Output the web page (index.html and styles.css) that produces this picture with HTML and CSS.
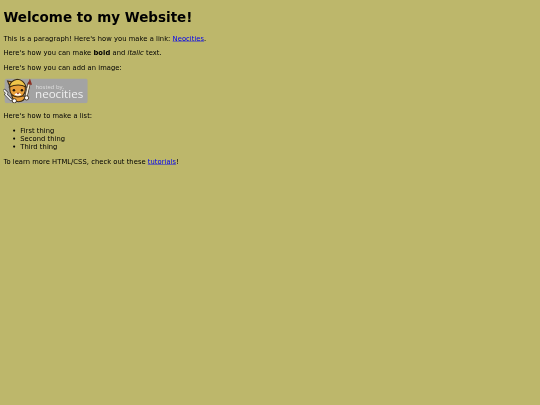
FILE: index.html
```html
<!DOCTYPE html>
<html>
<head>
  <meta charset="UTF-8">
  <title>The web site of me</title>
  <link rel="stylesheet" href="styles.css">
</head>
<body>
  <h1>Welcome to my Website!</h1>

  <p>This is a paragraph! Here's how you make a link: <a href="#">Neocities</a>.</p>

  <p>Here's how you can make <strong>bold</strong> and <em>italic</em> text.</p>

  <p>Here's how you can add an image:</p>

  <svg class="badge" viewBox="0 0 200 59" width="200" height="59">
    <rect x="3" y="0" width="197" height="59" rx="6" fill="#a3a3a3"/>
    <!-- paintbrush -->
    <path d="M54 42 L61 12" stroke="#3a2a12" stroke-width="7" stroke-linecap="round"/>
    <path d="M54 42 L61 12" stroke="#f4ecd8" stroke-width="4" stroke-linecap="round"/>
    <path d="M57 14 L63 0 L68 15 Z" fill="#8e2f22"/>
    <!-- wrench -->
    <path d="M2 28 L8 34 L6 38 L18 50" stroke="#333" stroke-width="7" fill="none" stroke-linecap="round"/>
    <path d="M2 28 L8 34 L6 38 L18 50" stroke="#ececec" stroke-width="4" fill="none" stroke-linecap="round"/>
    <!-- body and paws -->
    <path d="M20 40 Q22 55 36 55 Q50 55 52 42 Z" fill="#e9a03a" stroke="#3a2a12" stroke-width="2.5"/>
    <circle cx="26" cy="53" r="5" fill="#fff" stroke="#3a2a12" stroke-width="2"/>
    <circle cx="55" cy="46" r="5" fill="#fff" stroke="#3a2a12" stroke-width="2"/>
    <!-- ears and head -->
    <path d="M14 16 L10 6 L24 9 Z" fill="#e9a03a" stroke="#3a2a12" stroke-width="2.5"/>
    <path d="M15 24 Q15 15 22 13 L46 13 Q53 18 52 26 Q52 43 34 44 Q15 43 15 24 Z" fill="#e9a03a" stroke="#3a2a12" stroke-width="2.5"/>
    <!-- helmet -->
    <path d="M14 20 Q16 5 33 2 Q48 3 54 20 Q36 11 14 20 Z" fill="#f0c64a" stroke="#3a2a12" stroke-width="2.5"/>
    <path d="M26 38 Q34 31 43 38 Q35 44 26 38 Z" fill="#fff"/>
    <circle cx="25" cy="28" r="3" fill="#20160a"/>
    <circle cx="44" cy="28" r="3" fill="#20160a"/>
    <path d="M31 34 L38 34 L34.5 38 Z" fill="#8e2f22"/>
    <text class="badge-small" x="76" y="24">hosted by,</text>
    <text class="badge-large" x="75" y="47">neocities</text>
  </svg>

  <p>Here's how to make a list:</p>

  <ul>
    <li>First thing</li>
    <li>Second thing</li>
    <li>Third thing</li>
  </ul>

  <p>To learn more HTML/CSS, check out these <a href="#">tutorials</a>!</p>
</body>
</html>
```

FILE: styles.css
```css
html {
  background-color: #bdb76b;
  transform: scale(0.421875);
  transform-origin: 0 0;
  filter: blur(0.7px);
}

body {
  margin: 0 8px 8px;
  color: black;
  font-family: "DejaVu Sans", Verdana, sans-serif;
  letter-spacing: 0.1px;
}

h1 {
  letter-spacing: 0;
}

.badge-small {
  font-family: "Open Sans", sans-serif;
  font-size: 14px;
  letter-spacing: 0;
  fill: #dedede;
}

.badge-large {
  font-family: "Open Sans", sans-serif;
  font-size: 27.5px;
  letter-spacing: 0;
  fill: #efefef;
}
```
